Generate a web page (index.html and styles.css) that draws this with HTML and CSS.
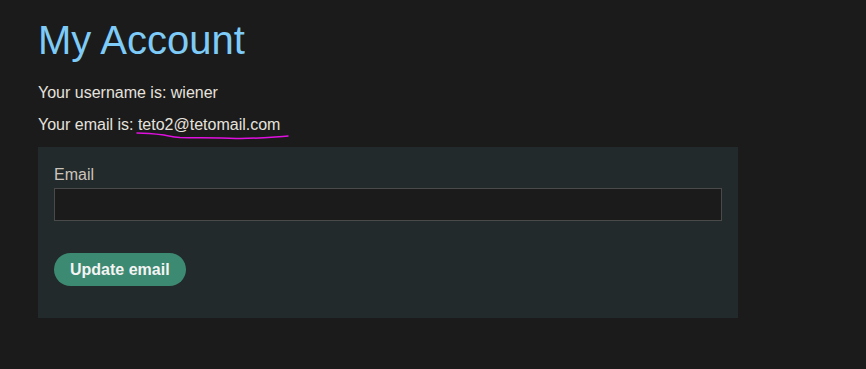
FILE: index.html
```html
<!DOCTYPE html>
<html>
<head>
<meta charset="utf-8">
<link rel="stylesheet" href="styles.css">
</head>
<body>
<main class="page">
  <h1 class="title">My Account</h1>
  <p class="info">Your username is: wiener</p>
  <p class="info">Your email is: <span class="email">teto2@tetomail.com<svg class="scribble" width="156" height="12" viewBox="0 0 156 12"><path d="M1 2 C 10 2, 20 3, 28 4 C 34 5, 36 6, 44 6.5 C 60 7, 80 6.5, 100 7.5 C 115 8, 130 6.5, 152 5" fill="none" stroke="#e010e0" stroke-width="1.5" stroke-linecap="round"/></svg></span></p>
  <form class="panel">
    <label class="label" for="email">Email</label>
    <input class="field" id="email" type="email">
    <button class="btn" type="button">Update email</button>
  </form>
</main>
</body>
</html>
```
FILE: styles.css
```css
html, body {
  margin: 0;
  background: #1b1b1b;
}
body {
  font-family: "Liberation Sans", Arial, sans-serif;
  color: #e6e2de;
}
.page {
  padding: 17px 0 0 38px;
  width: 700px;
}
.title {
  margin: 0 0 21px;
  font-size: 40px;
  font-weight: normal;
  line-height: 46px;
  color: #7ecbf8;
}
.info {
  margin: 0 0 14px;
  font-size: 16px;
  line-height: 18px;
}
.email {
  position: relative;
}
.scribble {
  position: absolute;
  left: -2px;
  top: 15px;
  overflow: visible;
}
.panel {
  margin-top: -1px;
  background: #222a2b;
  padding: 16px 16px 32px;
  display: flex;
  flex-direction: column;
  align-items: flex-start;
}
.label {
  font-size: 16px;
  line-height: 24px;
  color: #cbc4bc;
  margin-bottom: 1px;
}
.field {
  box-sizing: border-box;
  width: 100%;
  height: 33px;
  margin: 0 0 32px;
  background: #1b1b1b;
  border: 1px solid #4a4a4a;
  color: #e6e2de;
  padding: 0 8px;
  font-size: 16px;
  outline: none;
}
.btn {
  height: 33px;
  padding: 0 16px;
  border: none;
  border-radius: 17px;
  background: #3d8a72;
  color: #f4f4f4;
  font-family: "Liberation Sans", Arial, sans-serif;
  font-weight: bold;
  font-size: 16px;
}
```
